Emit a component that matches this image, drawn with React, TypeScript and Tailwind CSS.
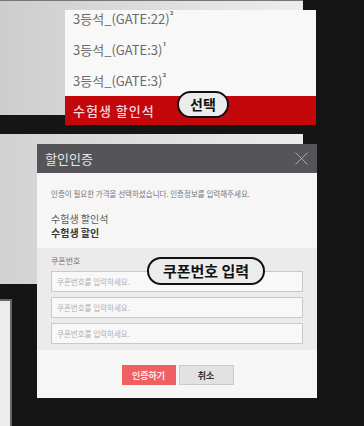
import React from "react";

const kr = "font-['Noto_Sans_CJK_KR','Noto_Sans',sans-serif]";

const seats = [
  { label: "3등석_(GATE:22)", sup: "²", h: "h-[30px]" },
  { label: "3등석_(GATE:3)", sup: "¹", h: "h-[31px]" },
  { label: "3등석_(GATE:3)", sup: "²", h: "h-[31px]" },
];

const Badge: React.FC<{ text: string; className: string }> = ({ text, className }) => (
  <div
    className={`absolute flex items-center justify-center rounded-full border-2 border-[#111] bg-[#ececec] font-bold text-[#111] ${className}`}
  >
    {text}
  </div>
);

const CouponInput: React.FC = () => (
  <div className="flex h-[21px] items-center border border-[#c9c9c9] bg-[#f8f8f8] pl-[5px] text-[7.5px] text-[#b0b0b0]">
    쿠폰번호를 입력하세요.
  </div>
);

export default function App() {
  return (
    <div className={`relative h-[426px] w-[364px] overflow-hidden bg-[#151515] ${kr}`}>
      {/* background panels */}
      <div className="absolute left-0 top-0 h-[115px] w-[303px] border-t border-[#777] bg-gradient-to-r from-[#cdcdcd] to-[#ededed]" />
      <div className="absolute left-0 top-[134px] h-[150px] w-[303px] bg-gradient-to-r from-[#d2d2d2] to-[#ececec]" />
      <div className="absolute left-0 top-[299px] h-[140px] w-[12px] border-r-2 border-t-2 border-[#666] bg-[#ececec]" />

      {/* seat dropdown */}
      <div className="absolute left-[65px] top-[10px] h-[115px] w-[251px] overflow-hidden bg-[#f8f8f8]">
        <div className="-mt-[6px] flex flex-col">
          {seats.map((s, i) => (
            <div key={i} className={`flex items-center pl-[8px] text-[13px] text-[#6a6a6a] ${s.h}`}>
              {s.label}
              <span className="-mt-[6px] text-[9px] font-bold">{s.sup}</span>
            </div>
          ))}
          <div className="flex h-[29px] items-center bg-[#c3070b] pl-[8px] text-[13px] font-medium tracking-[1px] text-[#f8d6dc]">
            수험생 할인석
          </div>
        </div>
      </div>
      <Badge text="선택" className="left-[177px] top-[91px] h-[27px] w-[52px] text-[14px]" />

      {/* discount modal */}
      <div className="absolute left-[37px] top-[144px] flex h-[254px] w-[280px] flex-col bg-[#f6f6f6]">
        <div className="flex h-[29px] items-center justify-between bg-[#555559] pl-[8px] pr-[9px]">
          <span className="text-[13px] text-[#e6e6e6]">할인인증</span>
          <svg width="13" height="13" viewBox="0 0 13 13" fill="none" stroke="#a9a9ad" strokeWidth="1">
            <path d="M0.5 0.5 L12.5 12.5 M12.5 0.5 L0.5 12.5" />
          </svg>
        </div>
        <div className="flex flex-col px-[14px] pt-[15px]">
          <p className="text-[7.5px] text-[#777]">인증이 필요한 가격을 선택하셨습니다. 인증정보를 입력해주세요.</p>
          <p className="mt-[13px] text-[10px] leading-[14px] text-[#5a5a5a]">수험생 할인석</p>
          <p className="text-[10px] font-bold leading-[14px] text-[#3a3a3a]">수험생 할인</p>
        </div>
        <div className="mt-[8px] flex flex-col gap-[5px] bg-[#ebebeb] px-[14px] pb-[6px] pt-[8px]">
          <span className="text-[8px] leading-[10px] text-[#777]">쿠폰번호</span>
          <CouponInput />
          <CouponInput />
          <CouponInput />
        </div>
        <div className="mt-[15px] flex justify-center gap-[3px] pl-[1px]">
          <button className="flex h-[20px] w-[54px] items-center justify-center bg-[#ef6062] text-[9px] font-bold text-[#fdeaea]">
            인증하기
          </button>
          <button className="flex h-[20px] w-[55px] items-center justify-center border border-[#cacaca] bg-[#e2e2e2] text-[9px] font-bold text-[#333]">
            취소
          </button>
        </div>
      </div>
      <Badge text="쿠폰번호 입력" className="left-[147px] top-[257px] h-[28px] w-[118px] text-[15px]" />
    </div>
  );
}
